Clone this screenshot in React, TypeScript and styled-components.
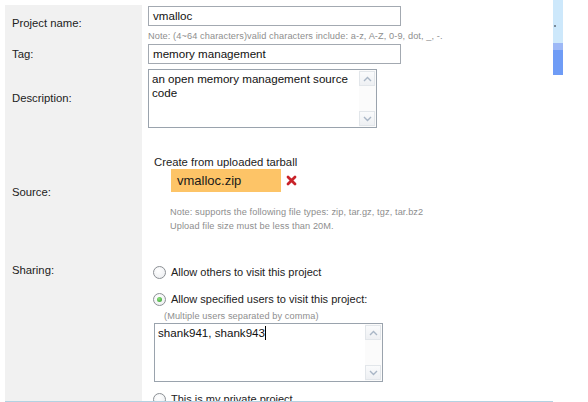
import React from 'react';
import styled, { createGlobalStyle } from 'styled-components';

const GlobalStyle = createGlobalStyle`
  html, body {
    margin: 0;
    padding: 0;
    background: #ffffff;
  }
  body {
    font-family: Arial, "Liberation Sans", sans-serif;
    color: #222;
  }
`;

const Page = styled.div`
  display: flex;
  width: 588px;
  height: 402px;
  overflow: hidden;
`;

const Form = styled.div`
  margin-left: 5px;
  padding-top: 5px;
  width: 548px;
  height: 396px;
  border-bottom: 1px solid #b3d2e2;
  overflow: hidden;
  display: grid;
  grid-template-columns: 137px 1fr;
  grid-template-rows: 35px 28px 60px 128px 1fr;
  column-gap: 6px;
`;

const Label = styled.div<{ $top?: number }>`
  background: #f1f1f1;
  padding-left: 7px;
  font-size: 11.3px;
  color: #222;
  display: flex;
  align-items: ${(p) => (p.$top !== undefined ? 'flex-start' : 'center')};
  padding-top: ${(p) => p.$top ?? 0}px;
  box-sizing: border-box;
`;

const Field = styled.div<{ $top: number }>`
  padding-top: ${(p) => p.$top}px;
  display: flex;
  flex-direction: column;
  align-items: flex-start;
  min-width: 0;
`;

const TextInput = styled.div<{ $width: number }>`
  width: ${(p) => p.$width}px;
  height: 20px;
  box-sizing: border-box;
  border: 1px solid #a3a9b1;
  padding: 0 4px;
  font-size: 11.6px;
  line-height: 18px;
  color: #111;
  white-space: nowrap;
`;

const Note = styled.div<{ $indent?: number; $mt?: number }>`
  font-size: 9.2px;
  color: #8e8e8e;
  line-height: 14px;
  margin-left: ${(p) => p.$indent ?? 0}px;
  margin-top: ${(p) => p.$mt ?? 0}px;
  white-space: nowrap;
  letter-spacing: 0.1px;
`;

const Area = styled.div<{ $width: number; $height: number; $ml?: number }>`
  width: ${(p) => p.$width}px;
  height: ${(p) => p.$height}px;
  margin-left: ${(p) => p.$ml ?? 0}px;
  box-sizing: border-box;
  border: 1px solid #9aa3ad;
  display: flex;
`;

const AreaText = styled.div`
  flex: 1;
  padding: 2px 3px;
  font-size: 11.6px;
  line-height: 14px;
  color: #111;
`;

const Caret = styled.span`
  display: inline-block;
  width: 1px;
  height: 14px;
  background: #000;
  vertical-align: top;
`;

const ScrollTrack = styled.div`
  width: 16px;
  display: flex;
  flex-direction: column;
  justify-content: space-between;
  padding: 1px 1px 1px 0;
  background: #fbfbfb;
`;

const ScrollButton = styled.div`
  height: 15px;
  border: 1px solid #e2e6ea;
  background: linear-gradient(#fafbfc, #eef0f3);
  display: flex;
  align-items: center;
  justify-content: center;
  box-sizing: border-box;
`;

const Text = styled.div<{ $indent?: number; $size?: number }>`
  font-size: ${(p) => p.$size ?? 11.3}px;
  margin-left: ${(p) => p.$indent ?? 0}px;
  color: #222;
  line-height: 14px;
  white-space: nowrap;
`;

const FileRow = styled.div`
  display: flex;
  align-items: center;
  margin-left: 23px;
  gap: 5px;
`;

const FileName = styled.div`
  width: 110px;
  height: 23px;
  background: #fdc467;
  font-size: 13px;
  line-height: 23px;
  padding-left: 6px;
  box-sizing: border-box;
  color: #1a1a1a;
`;

const RadioRow = styled.div<{ $mt?: number }>`
  display: flex;
  align-items: center;
  gap: 5px;
  margin-left: 5px;
  margin-top: ${(p) => p.$mt ?? 0}px;
  height: 16px;
`;

const RadioCircle = styled.span<{ $checked?: boolean }>`
  width: 13px;
  height: 13px;
  box-sizing: border-box;
  border-radius: 50%;
  border: 1px solid #8b8f94;
  background: radial-gradient(circle at 40% 35%, #ffffff, #e9ebee);
  display: flex;
  align-items: center;
  justify-content: center;

  &::after {
    content: '';
    display: ${(p) => (p.$checked ? 'block' : 'none')};
    width: 5px;
    height: 5px;
    border-radius: 50%;
    background: radial-gradient(circle at 40% 35%, #8fe07f, #2f9a2a);
  }
`;

const RadioLabel = styled.span`
  font-size: 11px;
  color: #222;
  white-space: nowrap;
`;

const PageScroll = styled.div`
  width: 10px;
  height: 76px;
  background: linear-gradient(
    #cde8fb 0,
    #cde8fb 43px,
    #9db8f6 43px,
    #9db8f6 50px,
    #6f9cf6 50px,
    #6f9cf6 75px,
    #fff 75px
  );
  display: flex;
  flex-direction: column;
  padding-top: 25px;
  box-sizing: border-box;
`;

const Tick = styled.span`
  width: 2px;
  height: 2px;
  margin-left: 1px;
  background: #7a8a99;
`;

const Arrow = ({ up }: { up?: boolean }) => (
  <svg width="9" height="6" viewBox="0 0 9 6">
    <path
      d={up ? 'M1 5 L4.5 1.5 L8 5' : 'M1 1 L4.5 4.5 L8 1'}
      fill="none"
      stroke="#a9b6c6"
      strokeWidth="1.4"
    />
  </svg>
);

const Scrollbar = () => (
  <ScrollTrack>
    <ScrollButton>
      <Arrow up />
    </ScrollButton>
    <ScrollButton>
      <Arrow />
    </ScrollButton>
  </ScrollTrack>
);

const RemoveIcon = () => (
  <svg width="11" height="11" viewBox="0 0 11 11">
    <path
      d="M2 2 L9 9 M9 2 L2 9"
      stroke="#c8232a"
      strokeWidth="2.8"
      strokeLinecap="round"
    />
  </svg>
);

const Radio = ({
  checked,
  children,
  mt,
}: {
  checked?: boolean;
  children: React.ReactNode;
  mt?: number;
}) => (
  <RadioRow $mt={mt}>
    <RadioCircle $checked={checked} />
    <RadioLabel>{children}</RadioLabel>
  </RadioRow>
);

const App = () => {
  return (
    <>
      <GlobalStyle />
      <Page>
        <Form>
          <Label>Project name:</Label>
          <Field $top={1}>
            <TextInput $width={253}>vmalloc</TextInput>
            <Note $mt={3}>
              Note: (4~64 characters)valid characters include: a-z, A-Z, 0-9,
              dot, _, -.
            </Note>
          </Field>

          <Label>Tag:</Label>
          <Field $top={4}>
            <TextInput $width={253}>memory management</TextInput>
          </Field>

          <Label>Description:</Label>
          <Field $top={1}>
            <Area $width={229} $height={59}>
              <AreaText>an open memory management source code</AreaText>
              <Scrollbar />
            </Area>
          </Field>

          <Label>Source:</Label>
          <Field $top={27}>
            <Text $indent={6}>Create from uploaded tarball</Text>
            <FileRow>
              <FileName>vmalloc.zip</FileName>
              <RemoveIcon />
            </FileRow>
            <Note $indent={22} $mt={13}>
              Note: supports the following file types: zip, tar.gz, tgz, tar.bz2
            </Note>
            <Note $indent={22}>Upload file size must be less than 20M.</Note>
          </Field>

          <Label $top={8}>Sharing:</Label>
          <Field $top={8}>
            <Radio>Allow others to visit this project</Radio>
            <Radio checked mt={11}>
              Allow specified users to visit this project:
            </Radio>
            <Note $indent={16} $mt={2}>
              (Multiple users separated by comma)
            </Note>
            <Area $width={229} $height={59} $ml={6}>
              <AreaText>
                shank941, shank943
                <Caret />
              </AreaText>
              <Scrollbar />
            </Area>
            <Radio mt={9}>This is my private project</Radio>
          </Field>
        </Form>
        <PageScroll>
          <Tick />
        </PageScroll>
      </Page>
    </>
  );
};

export default App;
